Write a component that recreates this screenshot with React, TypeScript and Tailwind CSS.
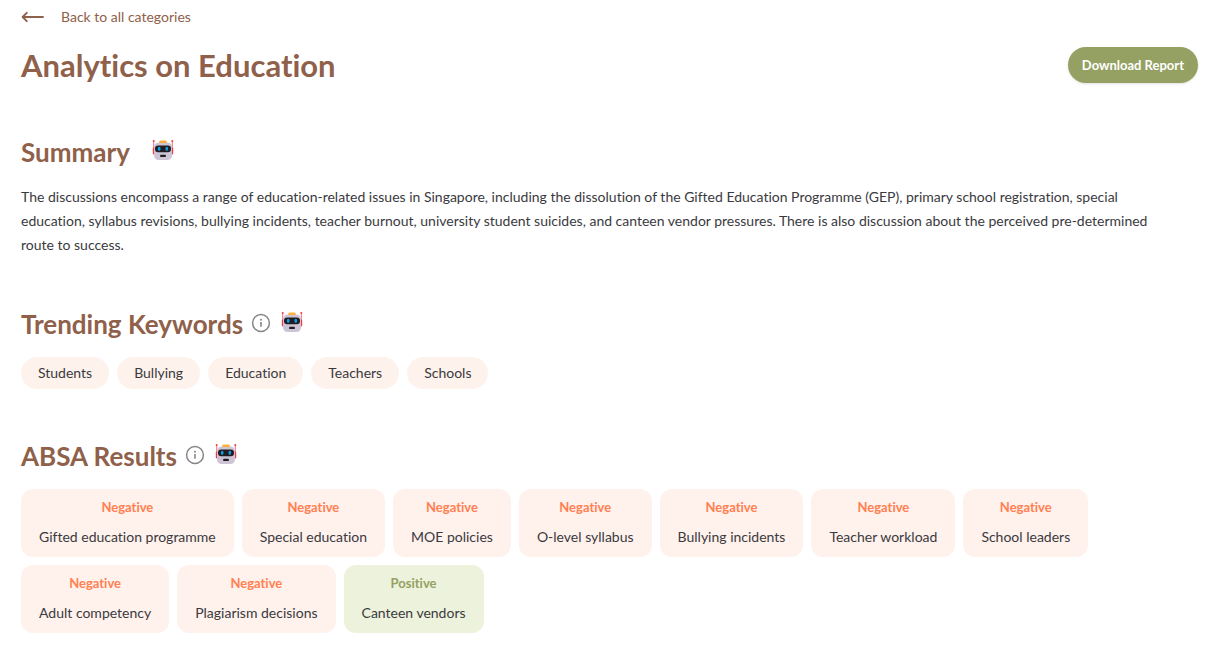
import React from "react";

const KEYWORDS = ["Students", "Bullying", "Education", "Teachers", "Schools"];

type Sentiment = "Negative" | "Positive";

const RESULTS: { label: string; sentiment: Sentiment }[] = [
  { label: "Gifted education programme", sentiment: "Negative" },
  { label: "Special education", sentiment: "Negative" },
  { label: "MOE policies", sentiment: "Negative" },
  { label: "O-level syllabus", sentiment: "Negative" },
  { label: "Bullying incidents", sentiment: "Negative" },
  { label: "Teacher workload", sentiment: "Negative" },
  { label: "School leaders", sentiment: "Negative" },
  { label: "Adult competency", sentiment: "Negative" },
  { label: "Plagiarism decisions", sentiment: "Negative" },
  { label: "Canteen vendors", sentiment: "Positive" },
];

function ArrowIcon() {
  return (
    <svg width="24" height="12" viewBox="0 0 24 12" fill="none" stroke="currentColor" strokeWidth="1.9" strokeLinecap="round" strokeLinejoin="round" aria-hidden="true">
      <path d="M22 6H2M5.8 1.8L1.6 6L5.8 10.2" />
    </svg>
  );
}

function InfoIcon() {
  return (
    <svg width="20" height="20" viewBox="0 0 20 20" fill="none" stroke="#85858a" aria-hidden="true">
      <circle cx="10" cy="10" r="8.4" strokeWidth="1.5" />
      <path d="M10 9V13.8" strokeWidth="1.6" />
      <circle cx="10" cy="6.8" r="1" fill="#85858a" stroke="none" />
    </svg>
  );
}

function RobotIcon() {
  return (
    <svg width="22" height="22" viewBox="0 0 22 22" aria-hidden="true">
      <path d="M1.7 2V9M20.3 2V9" stroke="#f4707a" strokeWidth="1" />
      <circle cx="1.7" cy="2" r="1" fill="#e8404c" />
      <circle cx="20.3" cy="2" r="1" fill="#e8404c" />
      <rect x="0.8" y="8.4" width="2.2" height="7.2" rx="1.1" fill="#f23b48" />
      <rect x="19" y="8.4" width="2.2" height="7.2" rx="1.1" fill="#f23b48" />
      <path d="M6.5 3.4H15.5Q20 4 20 8.4V15.4Q20 21 15 21H7Q2 21 2 15.4V8.4Q2 4 6.5 3.4Z" fill="#cdc4d6" />
      <path d="M7.3 4V2.8Q7.3 1.4 8.8 1.4H13.2Q14.7 1.4 14.7 2.8V4Z" fill="#fbb03b" />
      <rect x="3" y="6.4" width="16" height="6.8" rx="3.2" fill="#211d20" />
      <ellipse cx="7.2" cy="9.8" rx="1.4" ry="2.1" fill="#109be8" />
      <ellipse cx="14.8" cy="9.8" rx="1.4" ry="2.1" fill="#109be8" />
      <rect x="8.2" y="15.8" width="5.6" height="2.2" rx="0.6" fill="#211d20" />
    </svg>
  );
}

function SectionTitle({ children }: { children: React.ReactNode }) {
  return <h2 className="text-[26px] leading-8 font-bold text-[#8f604a]">{children}</h2>;
}

function InfoButton({ label }: { label: string }) {
  return (
    <button type="button" aria-label={label} className="mb-[2px] ml-2 rounded-full">
      <InfoIcon />
    </button>
  );
}

export default function App() {
  return (
    <main className="bg-white pt-[5px] pr-[25px] pb-6 pl-[21px] font-['Lato',sans-serif] text-[14px] leading-6 text-[#3a3a3e] [font-variant-ligatures:no-common-ligatures]">
      <a href="#categories" className="inline-flex items-center gap-4 align-top text-[#8f604a]">
        <ArrowIcon />
        Back to all categories
      </a>

      <header className="mt-4 flex items-center justify-between">
        <h1 className="text-[31px] leading-10 font-bold text-[#8f604a]">Analytics on Education</h1>
        <button
          type="button"
          className="h-9 rounded-full bg-[#94a162] px-[14px] text-[13px] font-bold text-white shadow-sm"
        >
          Download Report
        </button>
      </header>

      <section className="mt-[51px]">
        <div className="flex items-center">
          <SectionTitle>Summary</SectionTitle>
          <span className="mb-1 ml-[22px]">
            <RobotIcon />
          </span>
        </div>
        <p className="mt-[17px] pr-5">
          The discussions encompass a range of education-related issues in Singapore, including the dissolution of the
          Gifted Education Programme (GEP), primary school registration, special education, syllabus revisions, bullying
          incidents, teacher burnout, university student suicides, and canteen vendor pressures. There is also
          discussion about the perceived pre-determined route to success.
        </p>
      </section>

      <section className="mt-[51px]">
        <div className="flex items-center">
          <SectionTitle>Trending Keywords</SectionTitle>
          <InfoButton label="About trending keywords" />
          <span className="mb-1 ml-[10px]">
            <RobotIcon />
          </span>
        </div>
        <ul className="mt-[17px] flex flex-wrap gap-2">
          {KEYWORDS.map((word) => (
            <li key={word} className="rounded-full bg-[#fef2ed] px-[17px] py-1">
              {word}
            </li>
          ))}
        </ul>
      </section>

      <section className="mt-[51px]">
        <div className="flex items-center">
          <SectionTitle>ABSA Results</SectionTitle>
          <InfoButton label="About ABSA results" />
          <span className="mb-1 ml-[10px]">
            <RobotIcon />
          </span>
        </div>
        <ul className="mt-[17px] flex flex-wrap gap-2">
          {RESULTS.map(({ label, sentiment }) => (
            <li
              key={label}
              className={
                sentiment === "Positive"
                  ? "rounded-xl bg-[#edf2dc] px-[18px] py-2 text-center"
                  : "rounded-xl bg-[#fff1ec] px-[18px] py-2 text-center"
              }
            >
              <p
                className={
                  sentiment === "Positive"
                    ? "text-[13px] leading-5 font-bold text-[#94a162]"
                    : "text-[13px] leading-5 font-bold text-[#ff8052]"
                }
              >
                {sentiment}
              </p>
              <p className="mt-2">{label}</p>
            </li>
          ))}
        </ul>
      </section>
    </main>
  );
}
